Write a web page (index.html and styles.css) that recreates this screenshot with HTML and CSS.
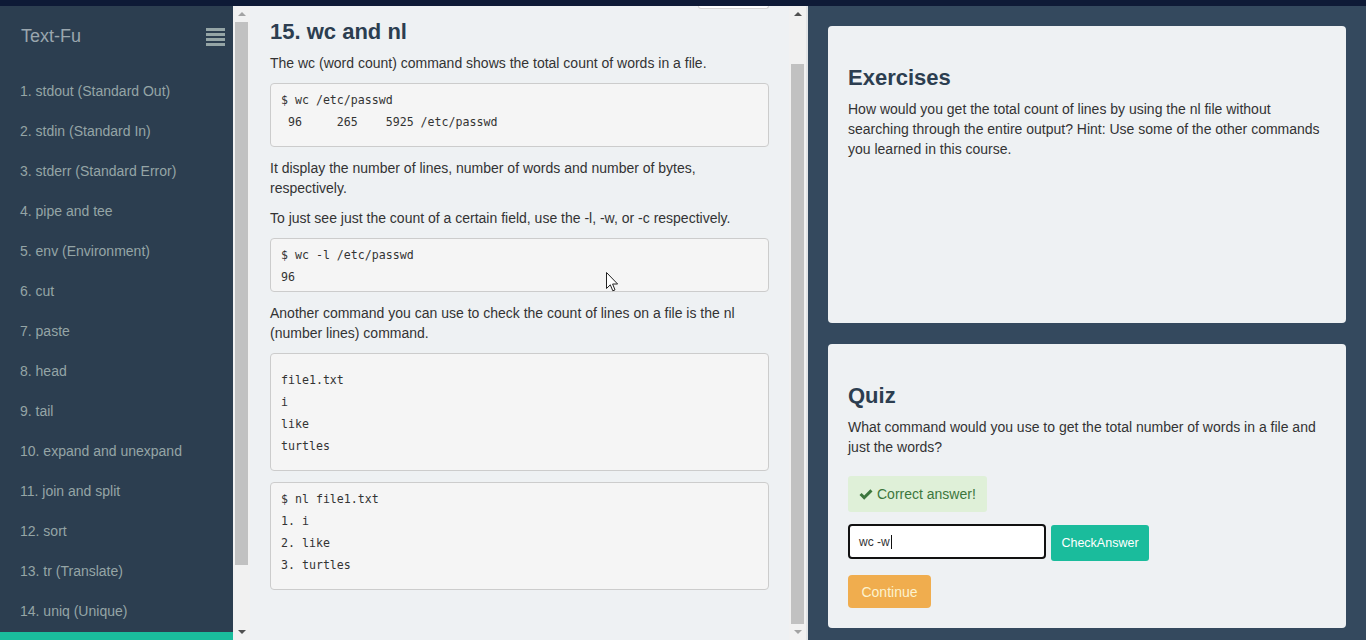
FILE: index.html
```html
<!DOCTYPE html>
<html lang="en">
<head>
<meta charset="utf-8">
<title>Text-Fu</title>
<link rel="stylesheet" href="styles.css">
</head>
<body>
<div class="topbar"></div>
<div class="app">
  <aside class="sidebar">
    <div class="brand">
      <span class="brand-name">Text-Fu</span>
      <svg class="menu-icon" width="19" height="18" viewBox="0 0 19 18" aria-hidden="true">
        <rect x="0" y="0" width="19" height="3"/>
        <rect x="0" y="5" width="19" height="3"/>
        <rect x="0" y="10" width="19" height="3"/>
        <rect x="0" y="15" width="19" height="3"/>
      </svg>
    </div>
    <ul class="nav">
      <li>1. stdout (Standard Out)</li>
      <li>2. stdin (Standard In)</li>
      <li>3. stderr (Standard Error)</li>
      <li>4. pipe and tee</li>
      <li>5. env (Environment)</li>
      <li>6. cut</li>
      <li>7. paste</li>
      <li>8. head</li>
      <li>9. tail</li>
      <li>10. expand and unexpand</li>
      <li>11. join and split</li>
      <li>12. sort</li>
      <li>13. tr (Translate)</li>
      <li>14. uniq (Unique)</li>
      <li class="active"></li>
    </ul>
  </aside>

  <main class="lesson">
    <div class="scrollbar sb-left">
      <div class="sb-btn"><span class="tri up dim"></span></div>
      <div class="sb-track"><div class="sb-thumb"></div></div>
      <div class="sb-btn"><span class="tri down"></span></div>
    </div>

    <div class="content">
      <div class="top-button"></div>
      <h2 class="lesson-title">15. wc and nl</h2>
      <p>The wc (word count) command shows the total count of words in a file.</p>
      <pre class="code">$ wc /etc/passwd
 96     265    5925 /etc/passwd</pre>
      <p>It display the number of lines, number of words and number of bytes, respectively.</p>
      <p>To just see just the count of a certain field, use the -l, -w, or -c respectively.</p>
      <pre class="code tight">$ wc -l /etc/passwd
96</pre>
      <p>Another command you can use to check the count of lines on a file is the nl (number lines) command.</p>
      <pre class="code lead">file1.txt
i
like
turtles</pre>
      <pre class="code">$ nl file1.txt
1. i
2. like
3. turtles</pre>
    </div>

    <div class="scrollbar sb-right">
      <div class="sb-btn"><span class="tri up"></span></div>
      <div class="sb-track"><div class="sb-thumb"></div></div>
      <div class="sb-btn"><span class="tri down dim"></span></div>
    </div>
  </main>

  <section class="panel">
    <div class="card card-exercises">
      <h3>Exercises</h3>
      <p>How would you get the total count of lines by using the nl file without searching through the entire output? Hint: Use some of the other commands you learned in this course.</p>
    </div>
    <div class="card card-quiz">
      <h3>Quiz</h3>
      <p>What command would you use to get the total number of words in a file and just the words?</p>
      <div class="alert">
        <svg class="check" width="14" height="13" viewBox="0 0 14 13" aria-hidden="true">
          <path d="M0.5 7 L2.6 4.9 L5.2 7.5 L11.4 1.3 L13.5 3.4 L5.2 11.7 Z"/>
        </svg>
        <span>Correct answer!</span>
      </div>
      <div class="answer-row">
        <div class="answer-input"><span>wc -w</span><span class="caret"></span></div>
        <button class="btn-check">CheckAnswer</button>
      </div>
      <button class="btn-continue">Continue</button>
    </div>
  </section>
</div>

<svg class="cursor" width="13" height="21" viewBox="0 0 13 21" aria-hidden="true">
  <path d="M0.5 0.5 L0.5 16.5 L4.3 12.8 L6.8 18.8 L9 17.9 L6.6 12 L11.6 12 Z" fill="#ffffff" stroke="#222" stroke-width="1" stroke-linejoin="round"/>
</svg>
</body>
</html>
```

FILE: styles.css
```css
* { box-sizing: border-box; }

html, body {
  margin: 0;
  padding: 0;
  width: 1366px;
  height: 640px;
  overflow: hidden;
}

body {
  font-family: "Liberation Sans", Arial, sans-serif;
  font-size: 14px;
  line-height: 20px;
  color: #333333;
  background: #34495e;
  position: relative;
}

.topbar {
  height: 6px;
  background: #0e1a36;
}

.app {
  display: flex;
  height: 634px;
}

/* Sidebar */
.sidebar {
  width: 233px;
  flex: none;
  background: #2c3e50;
  color: #95a5a6;
  overflow: hidden;
}

.brand {
  display: flex;
  align-items: center;
  justify-content: space-between;
  padding: 20px 8px 23px 21px;
  height: 65px;
}

.brand-name {
  font-size: 18px;
  line-height: 20px;
  color: #9aa6ae;
  margin-top: -2px;
}

.menu-icon {
  fill: #95a5a6;
  margin-top: -1px;
}

.nav {
  list-style: none;
  margin: 0;
  padding: 0;
}

.nav li {
  height: 40px;
  line-height: 40px;
  padding-left: 20px;
  font-size: 14px;
  white-space: nowrap;
}

.nav li.active {
  background: #1abc9c;
  color: #ffffff;
  margin-top: 1px;
}

/* Lesson area */
.lesson {
  width: 575px;
  flex: none;
  display: flex;
  background: #eef1f3;
  border-right: 2px solid #e2e4e6;
}

.scrollbar {
  width: 17px;
  flex: none;
  display: flex;
  flex-direction: column;
  background: #f1f1f1;
}

.sb-btn {
  height: 16px;
  flex: none;
  display: flex;
  align-items: center;
  justify-content: center;
}

.sb-track {
  flex: 1;
  padding: 0 2px;
}

.sb-thumb {
  background: #c1c1c1;
  width: 13px;
}

.sb-left .sb-thumb { height: 543px; }

.sb-right .sb-track { padding-top: 42px; }
.sb-right .sb-thumb { height: 560px; }

.tri {
  width: 0;
  height: 0;
  border-left: 4px solid transparent;
  border-right: 4px solid transparent;
}

.tri.up { border-bottom: 4px solid #505050; }
.tri.down { border-top: 4px solid #505050; }
.tri.up.dim { border-bottom-color: #a3a3a3; }
.tri.down.dim { border-top-color: #a3a3a3; }

.content {
  flex: 1;
  padding: 0 20px;
  overflow: hidden;
}

.top-button {
  width: 71px;
  height: 3px;
  margin-left: auto;
  background: #ffffff;
  border: 1px solid #d4d4d4;
  border-top: none;
  border-radius: 0 0 3px 3px;
}

.lesson-title {
  font-size: 22px;
  line-height: 24px;
  font-weight: bold;
  color: #2c3e50;
  margin: 11px 0 9px;
}

.content p {
  margin: 0 0 10px;
}

.code {
  margin: 0 0 11px;
  padding: 5px 10px 13px;
  font-family: "DejaVu Sans Mono", "Liberation Mono", monospace;
  font-size: 11.6px;
  line-height: 22px;
  color: #333333;
  background: #f5f5f5;
  border: 1px solid #cccccc;
  border-radius: 4px;
  white-space: pre;
}

.code.tight { padding-bottom: 3px; }
.code.lead { padding-top: 15px; }

/* Right panel */
.panel {
  flex: 1;
  padding: 20px 20px 0;
  display: flex;
  flex-direction: column;
  gap: 21px;
  background: #34495e;
}

.card {
  background: #eef1f3;
  border-radius: 4px;
  padding: 20px;
}

.card-exercises { height: 297px; }
.card-quiz { height: 284px; }

.card h3 {
  font-size: 22px;
  line-height: 24px;
  font-weight: bold;
  color: #2c3e50;
  margin: 20px 0 9px;
}

.card p {
  margin: 0 0 10px;
}

.alert {
  display: inline-flex;
  align-items: center;
  gap: 4px;
  margin-top: 9px;
  height: 36px;
  padding: 0 11px;
  background: #dff0d8;
  color: #3c763d;
  border-radius: 3px;
}

.check {
  fill: #3c763d;
}

.answer-row {
  display: flex;
  align-items: flex-start;
  gap: 5px;
  margin-top: 12px;
}

.answer-input {
  width: 198px;
  height: 35px;
  border: 2px solid #111111;
  border-radius: 4px;
  background: #ffffff;
  padding: 0 9px;
  display: flex;
  align-items: center;
  font-size: 12px;
  color: #333333;
}

.caret {
  width: 1px;
  height: 14px;
  background: #111111;
  margin-left: 1px;
}

.btn-check {
  margin-top: 1px;
  width: 98px;
  height: 36px;
  border: none;
  border-radius: 3px;
  background: #1abc9c;
  color: #ffffff;
  font-family: "Liberation Sans", Arial, sans-serif;
  font-size: 12.5px;
  padding: 0;
}

.btn-continue {
  display: block;
  margin-top: 14px;
  width: 83px;
  height: 33px;
  border: none;
  border-radius: 4px;
  background: #f0ad4e;
  color: #fcf3cf;
  font-family: "Liberation Sans", Arial, sans-serif;
  font-size: 14px;
  padding: 0;
}

/* Mouse pointer overlay */
.cursor {
  position: absolute;
  left: 606px;
  top: 272px;
}
```
